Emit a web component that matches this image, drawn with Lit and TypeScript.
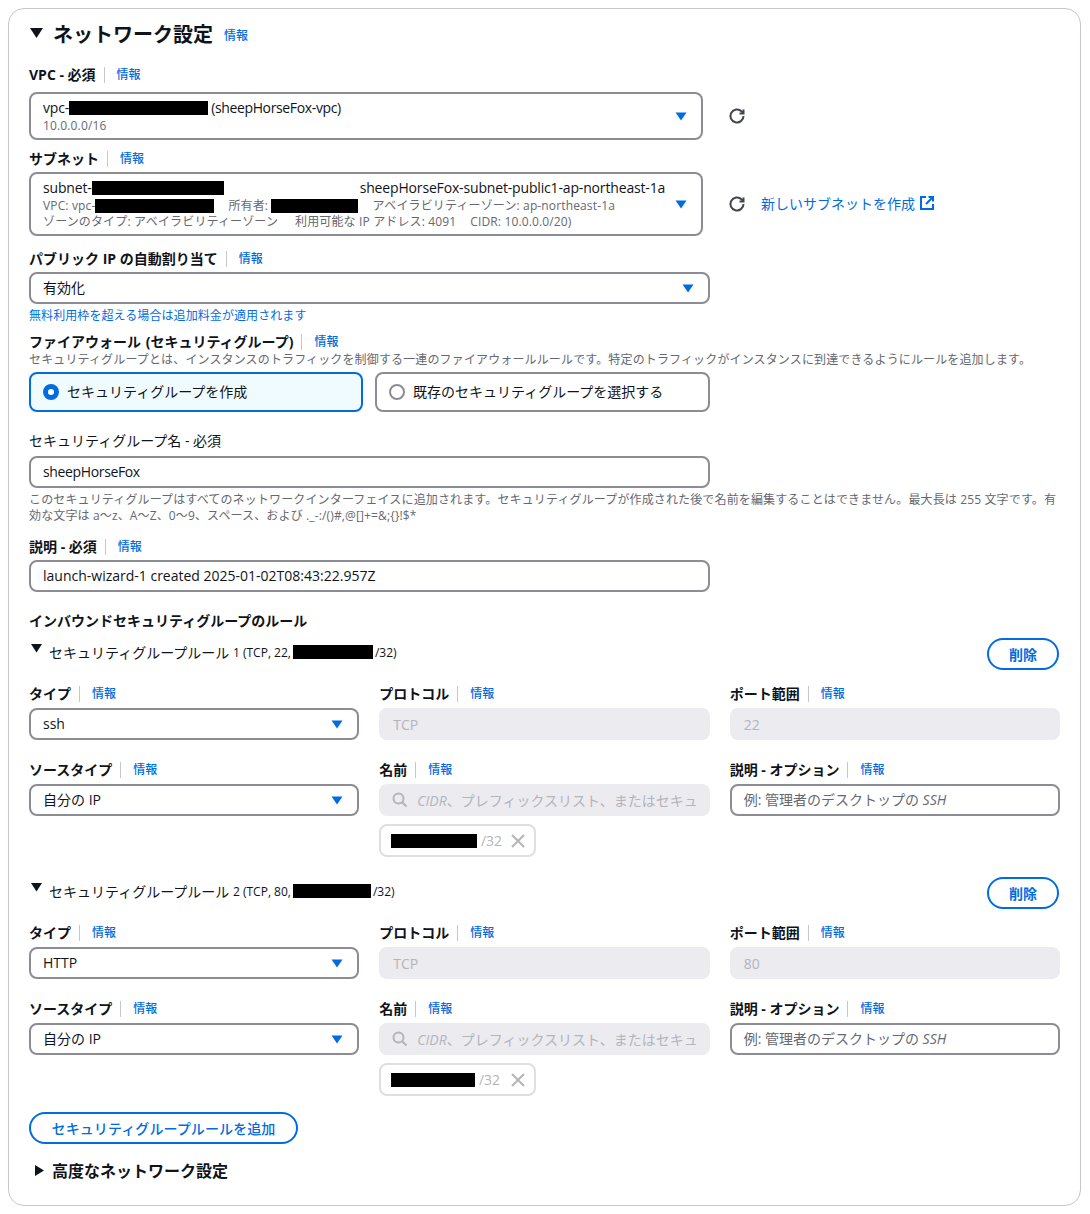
import { LitElement, html, css, svg } from "lit";
import { customElement } from "lit/decorators.js";

const caret = html`<svg class="caret" width="12" height="9" viewBox="0 0 12 9"><path d="M0.5 0.5h11L6 8.5z" fill="#006ce0"/></svg>`;
const refresh = html`<svg class="refresh" width="18" height="18" viewBox="0 0 18 18" fill="none" stroke="#424650" stroke-width="2"><path d="M15.5 9a6.5 6.5 0 1 1-2-4.7L15.5 6.3"/><path d="M15.5 2.5v4h-4" stroke-linejoin="miter"/></svg>`;
const ext = html`<svg class="ext" width="14" height="14" viewBox="0 0 14 14" fill="none" stroke="#006ce0" stroke-width="2"><path d="M6 1H1v12h12V8"/><path d="M8.5 1H13v4.5M13 1L6 8"/></svg>`;
const searchIcon = svg`<circle cx="6.5" cy="6.5" r="5" /><path d="M10.2 10.2L14.5 14.5"/>`;
const xIcon = html`<svg width="14" height="14" viewBox="0 0 14 14" fill="none" stroke="#b4b4bb" stroke-width="2"><path d="M1 1l12 12M13 1L1 13"/></svg>`;

const redact = (w: number) => html`<span class="redact" style="width:${w}px"></span>`;
const info = (label: string, cls = "") => html`<div class="lbl ${cls}"><span class="lt">${label}</span><span class="div"></span><a class="info">情報</a></div>`;

@customElement("app-root")
export class AppRoot extends LitElement {
  static styles = css`
    :host { display: block; font-family: "Open Sans", "Noto Sans CJK JP", sans-serif; font-size: 14px; color: #0f141a; background: #fff; }
    * { box-sizing: border-box; }
    .card { margin: 8px 9px 8px 8px; height: 1198px; border: 1px solid #c6c6cd; border-radius: 16px; padding: 11px 20px 0 20px; }
    .h { display: flex; align-items: center; height: 26px; }
    .tri { margin: 0 10px 0 1px; }
    .h1 { font-size: 20px; font-weight: 700; }
    .h .info { margin-left: 11px; margin-top: 3px; }
    .info { font-size: 12px; color: #006ce0; font-weight: 500; }
    .lbl { display: flex; align-items: center; height: 20px; line-height: 20px; }
    .lt { font-weight: 700; }
    .wide .lt { word-spacing: 1px; }
    .div { width: 1px; height: 16px; background: #c6c6cd; margin: 0 12px 0 8px; }
    .plain { font-weight: 400; height: 20px; line-height: 20px; }
    .redact { display: inline-block; height: 14px; background: #000; vertical-align: middle; flex: none; }
    .row { display: flex; align-items: center; }
    .sel, .inp { position: relative; border: 2px solid #8c8c94; border-radius: 8px; background: #fff; padding: 0 12px; height: 32px; display: flex; align-items: center; line-height: 20px; }
    .caret { position: absolute; right: 14px; top: 50%; margin-top: -4px; }
    .w703 { width: 674px; }
    .w710 { width: 681px; }
    .multi { display: block; padding-top: 4px; }
    .h48 { height: 48px; }
    .h64 { height: 64px; }
    .sub { font-size: 12px; line-height: 16px; color: #656871; display: flex; white-space: pre; align-items: center; letter-spacing: 0.14px; }
    .main { display: flex; align-items: center; height: 20px; white-space: pre; letter-spacing: -0.16px; }
    .tight { letter-spacing: -0.36px; }
    .m211 { margin-left: 3px; }
    .m359 { margin-left: 136px; }
    .m229 { margin-left: 14px; }
    .m373 { margin-left: 14px; }
    .m295 { margin-left: 17px; }
    .m471 { margin-left: 14px; }
    .refresh { margin-left: 25px; flex: none; }
    .new { color: #006ce0; margin: 0 0 2px 15px; display: flex; align-items: center; gap: 5px; }
    .note { font-size: 12px; line-height: 16px; color: #006ce0; margin-top: 4px; letter-spacing: 0.08px; }
    .desc { font-size: 12px; line-height: 16px; color: #656871; letter-spacing: 0.14px; }
    .desc2 { margin-top: 4px; }
    .radios { display: flex; gap: 12px; width: 681px; margin-top: 4px; }
    .radio { height: 40px; border: 2px solid #8c8c94; border-radius: 8px; display: flex; align-items: center; padding: 0 0 2px 12px; gap: 8px; flex: 1 1 0; }
    .radio.on { border-color: #006ce0; background: #f0fbff; flex: 0 0 334px; }
    .dot { width: 16px; height: 16px; border-radius: 50%; border: 2px solid #8c8c94; background: #fff; flex: none; margin-top: 2px; }
    .on .dot { border: 5px solid #006ce0; }
    .h2 { font-weight: 700; height: 20px; line-height: 20px; }
    .rh { display: flex; align-items: flex-start; height: 34px; justify-content: space-between; }
    .rh-l { display: flex; align-items: center; margin-top: 4px; height: 20px; white-space: pre; }
    .rh-l .tri2 { margin: -8px 7px 0 2px; }
    .rh-l .redact { margin: 0 2px; }
    .small { font-size: 12px; }
    .btn { border: 2px solid #006ce0; border-radius: 20px; height: 32px; color: #006ce0; font-weight: 700; display: inline-flex; align-items: center; justify-content: center; font-size: 14px; background: #fff; }
    .del { width: 72px; margin-right: 1px; }
    .add { width: 269px; font-size: 14px; font-weight: 500; letter-spacing: 0.1px; }
    .grid { display: grid; grid-template-columns: repeat(3, 1fr); column-gap: 20px; }
    .f { display: flex; flex-direction: column; gap: 4px; margin-top: 12px; min-width: 0; }
    .f.gap { margin-top: 20px; }
    .f .sel, .f .inp, .f .dis { width: 100%; }
    .dis { background: #ebebf0; border-radius: 8px; height: 32px; padding: 0 14px; display: flex; align-items: center; color: #b4b4bb; white-space: nowrap; overflow: hidden; }
    .it { font-style: italic; }
    .ph { color: #656871; }
    .mag { flex: none; margin: 0 9px 0 -1px; fill: none; stroke: #b4b4bb; stroke-width: 2; }
    .chip { margin-top: 4px; width: 157px; height: 33px; border: 2px solid #dedee3; border-radius: 8px; display: flex; align-items: center; padding: 0 9px 0 10px; color: #b4b4bb; }
    .chip .x { margin-left: auto; display: flex; }
    .adv { display: flex; align-items: center; height: 24px; font-size: 16px; font-weight: 700; }
    .adv .tr { margin: 0 8px 0 6px; }
    .s19 { height: 19px; } .s3 { height: 3px; } .s4 { height: 4px; } .s5 { height: 5px; } .s7 { height: 7px; } .s9 { height: 9px; }
    .s13 { height: 13px; } .s14 { height: 14px; } .s16 { height: 16px; } .s20 { height: 20px; } .s8 { height: 8px; }
  `;

  rule(n: number, port: string, proto: string, type: string, rw: number, crw: number) {
    return html`
      <div class="rh">
        <div class="rh-l">
          <svg class="tri2" width="11" height="9" viewBox="0 0 11 9"><path d="M0 0h11L5.5 8.5z" fill="#0f141a"/></svg>
          <span>セキュリティグループルール </span><span class="small">${n} (TCP, ${port},</span>${redact(rw)}<span class="small">/32)</span>
        </div>
        <div class="btn del">削除</div>
      </div>
      <div class="grid">
        <div class="f">${info("タイプ")}<div class="sel">${type}${caret}</div></div>
        <div class="f">${info("プロトコル")}<div class="dis">${proto}</div></div>
        <div class="f">${info("ポート範囲")}<div class="dis">${port}</div></div>
        <div class="f gap">${info("ソースタイプ")}<div class="sel">自分の IP${caret}</div></div>
        <div class="f gap">
          ${info("名前")}
          <div class="dis"><svg class="mag" width="16" height="16" viewBox="0 0 16 16">${searchIcon}</svg><span><span class="it">CIDR</span>、プレフィックスリスト、またはセキュ</span></div>
          <div class="chip">${redact(crw)}<span>&nbsp;/32</span><span class="x">${xIcon}</span></div>
        </div>
        <div class="f gap">${info("説明 - オプション")}<div class="inp"><span class="ph">例: 管理者のデスクトップの <span class="it">SSH</span></span></div></div>
      </div>`;
  }

  render() {
    return html`
      <div class="card">
        <div class="h">
          <svg class="tri" width="13" height="10" viewBox="0 0 13 10"><path d="M0 0h13L6.5 10z" fill="#0f141a"/></svg>
          <span class="h1">ネットワーク設定</span><a class="info">情報</a>
        </div>
        <div class="s19"></div>
        ${info("VPC - 必須")}
        <div class="s7"></div>
        <div class="row">
          <div class="sel multi w703 h48">
            <div class="main">vpc-${redact(139)}<span class="m211 tight">(sheepHorseFox-vpc)</span></div>
            <div class="sub">10.0.0.0/16</div>
            ${caret}
          </div>
          ${refresh}
        </div>
        <div class="s9"></div>
        ${info("サブネット")}
        <div class="s3"></div>
        <div class="row">
          <div class="sel multi w703 h64">
            <div class="main">subnet-${redact(132)}<span class="m359">sheepHorseFox-subnet-public1-ap-northeast-1a</span></div>
            <div class="sub">VPC: vpc-${redact(119)}<span class="m229">所有者: </span>${redact(87)}<span class="m373">アベイラビリティーゾーン: ap-northeast-1a</span></div>
            <div class="sub">ゾーンのタイプ: アベイラビリティーゾーン<span class="m295">利用可能な IP アドレス: 4091</span><span class="m471">CIDR: 10.0.0.0/20)</span></div>
            ${caret}
          </div>
          ${refresh}
          <a class="new">新しいサブネットを作成${ext}</a>
        </div>
        <div class="s13"></div>
        ${info("パブリック IP の自動割り当て")}
        <div class="s3"></div>
        <div class="sel w710">有効化${caret}</div>
        <div class="note">無料利用枠を超える場合は追加料金が適用されます</div>
        <div class="s8"></div>
        ${info("ファイアウォール (セキュリティグループ)", "wide")}
        <div class="desc">セキュリティグループとは、インスタンスのトラフィックを制御する一連のファイアウォールルールです。特定のトラフィックがインスタンスに到達できるようにルールを追加します。</div>
        <div class="radios">
          <div class="radio on"><span class="dot"></span>セキュリティグループを作成</div>
          <div class="radio"><span class="dot"></span>既存のセキュリティグループを選択する</div>
        </div>
        <div class="s19"></div>
        <div class="plain">セキュリティグループ名 - 必須</div>
        <div class="s5"></div>
        <div class="inp w710"><span class="tight">sheepHorseFox</span></div>
        <div class="desc desc2">このセキュリティグループはすべてのネットワークインターフェイスに追加されます。セキュリティグループが作成された後で名前を編集することはできません。最大長は 255 文字です。有効な文字は a～z、A～Z、0～9、スペース、および ._-:/()#,@[]+=&amp;;{}!$*</div>
        <div class="s13"></div>
        ${info("説明 - 必須")}
        <div class="s3"></div>
        <div class="inp w710">launch-wizard-1 created 2025-01-02T08:43:22.957Z</div>
        <div class="s19"></div>
        <div class="h2">インバウンドセキュリティグループのルール</div>
        <div class="s7"></div>
        ${this.rule(1, "22", "TCP", "ssh", 80, 86)}
        <div class="s20"></div>
        ${this.rule(2, "80", "TCP", "HTTP", 78, 84)}
        <div class="s16"></div>
        <div class="btn add">セキュリティグループルールを追加</div>
        <div class="s14"></div>
        <div class="adv"><svg class="tr" width="9" height="11" viewBox="0 0 9 11"><path d="M0 0l9 5.5L0 11z" fill="#0f141a"/></svg>高度なネットワーク設定</div>
      </div>`;
  }
}
